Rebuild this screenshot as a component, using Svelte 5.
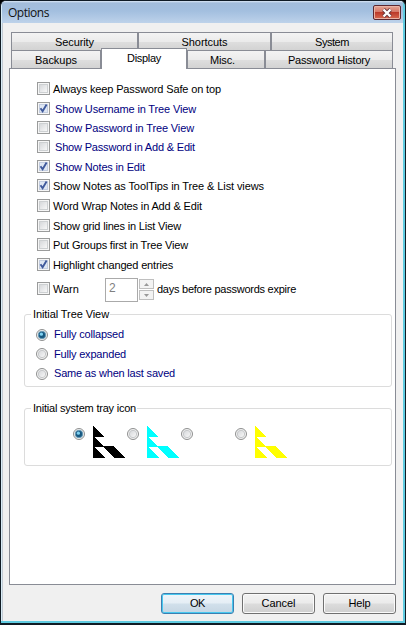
<script>
  const checks = [
    { t: 'Always keep Password Safe on top', w: 168, h: 20 },
    { t: 'Show Username in Tree View', w: 141, h: 19, on: true, blue: true },
    { t: 'Show Password in Tree View', w: 139, h: 19, blue: true },
    { t: 'Show Password in Add & Edit', w: 140, h: 20, blue: true },
    { t: 'Show Notes in Edit', w: 90, h: 19, on: true, blue: true },
    { t: 'Show Notes as ToolTips in Tree & List views', w: 211, h: 20, on: true },
    { t: 'Word Wrap Notes in Add & Edit', w: 149, h: 20 },
    { t: 'Show grid lines in List View', w: 128, h: 19 },
    { t: 'Put Groups first in Tree View', w: 135, h: 20 },
    { t: 'Highlight changed entries', w: 120, h: 24, on: true }
  ];
  const radios = [
    { t: 'Fully collapsed', w: 70, on: true },
    { t: 'Fully expanded', w: 72 },
    { t: 'Same as when last saved', w: 121 }
  ];
  const tray = [{ c: '#000', on: true }, { c: '#0ff' }, { c: null }, { c: '#ff0' }];

  // Spreads the letters so that the label takes the given width.
  function fit(node, width) {
    const natural = node.getBoundingClientRect().width;
    node.style.letterSpacing = (width - natural) / node.textContent.length + 'px';
  }
</script>

{#snippet label(t, w)}<span class="label" use:fit={w}>{t}</span>{/snippet}

{#snippet box(on)}
  <svg class="box" width="13" height="13" viewBox="0 0 13 13">
    <rect x=".5" y=".5" width="12" height="12" fill="#f6f6f6" stroke="#9a9b9b" />
    <rect x="2.5" y="2.5" width="8" height="8" fill={on ? '#dfe7f3' : 'url(#boxfill)'} stroke={on ? '#c3cde0' : '#cdd0d2'} />
    {#if on}<path d="M3.5 6.2 L5.6 9.2 L9.6 2.6" fill="none" stroke="#405a9c" stroke-width="1.9" />{/if}
  </svg>
{/snippet}

{#snippet radio(on)}
  <svg class="radio" width="12" height="12" viewBox="0 0 12 12">
    <circle cx="6" cy="6" r="5.5" fill="#f4f4f4" stroke="#8e8f8f" />
    {#if on}
      <circle cx="6" cy="6" r="3.8" fill="#1d5f8a" stroke="#6f9fb9" stroke-width=".8" />
      <circle cx="6" cy="6" r="2.6" fill="#17587f" />
      <circle cx="5.4" cy="5.2" r="1.6" fill="#7fd2f2" />
    {:else}
      <circle cx="6" cy="6" r="3.7" fill="url(#boxfill)" stroke="#c6c8ca" />
    {/if}
  </svg>
{/snippet}

<div class="window">
  <svg class="defs" width="0" height="0">
    <defs>
      <linearGradient id="boxfill" x1="0" y1="0" x2="1" y2="1">
        <stop offset="0" stop-color="#d4d6d9" /><stop offset="1" stop-color="#fafafa" />
      </linearGradient>
    </defs>
  </svg>
  <header>
    <h1>{@render label('Options', 41)}</h1>
    <button class="close" aria-label="Close">
      <svg width="12" height="10" viewBox="0 0 12 10">
        <path d="M2.5 1.5 L9.5 8.5 M9.5 1.5 L2.5 8.5" stroke="#66343a" stroke-width="4" />
        <path d="M2.5 1.5 L9.5 8.5 M9.5 1.5 L2.5 8.5" stroke="#fff" stroke-width="2.4" />
      </svg>
    </button>
  </header>
  <nav>
    <div class="tabs back">
      <div class="tab">{@render label('Security', 39)}</div>
      <div class="tab">{@render label('Shortcuts', 46)}</div>
      <div class="tab">{@render label('System', 34)}</div>
    </div>
    <div class="tabs front">
      <div class="tab">{@render label('Backups', 42)}</div>
      <div class="tab active">{@render label('Display', 34)}</div>
      <div class="tab misc">{@render label('Misc.', 25)}</div>
      <div class="tab">{@render label('Password History', 82)}</div>
    </div>
  </nav>
  <main>
    <div class="checks">
      {#each checks as c}
        <div class="check" class:blue={c.blue} style:height="{c.h}px">{@render box(c.on)}{@render label(c.t, c.w)}</div>
      {/each}
      <div class="check warn">
        {@render box(false)}{@render label('Warn', 26)}
        <div class="number">2</div>
        <div class="spin">
          <i><svg width="5" height="3"><path d="M0 3 L2.5 0 L5 3Z" fill="#999" /></svg></i>
          <i><svg width="5" height="3"><path d="M0 0 L2.5 3 L5 0Z" fill="#999" /></svg></i>
        </div>
        {@render label('days before passwords expire', 139)}
      </div>
    </div>
    <section class="group tree">
      <h2>{@render label('Initial Tree View', 76)}</h2>
      {#each radios as r}
        <div class="choice">{@render radio(r.on)}{@render label(r.t, r.w)}</div>
      {/each}
    </section>
    <section class="group tray">
      <h2>{@render label('Initial system tray icon', 103)}</h2>
      <div class="icons">
        {#each tray as i}
          <div class="icon">
            {@render radio(i.on)}
            {#if i.c}
              <svg width="32" height="32" viewBox="0 0 32 32" fill={i.c} shape-rendering="crispEdges">
                <path d="M0 0 L10.5 10.5 H0Z M0 10 L10 20 H21 L32 32 H21 L10.5 21 H0Z M0 20 L12 32 H0Z" />
              </svg>
            {/if}
          </div>
        {/each}
      </div>
    </section>
  </main>
  <footer>
    <button class="default">{@render label('OK', 15)}</button>
    <button>{@render label('Cancel', 34)}</button>
    <button>{@render label('Help', 22)}</button>
  </footer>
</div>

<style>
  :global(body) { background: #000; }
  .window {
    box-sizing: border-box;
    width: 406px;
    height: 625px;
    padding: 0 8px;
    position: relative;
    background: #f0f0f0;
    border: solid #101b24;
    border-width: 1px 1px 2px 1px;
    border-radius: 6px 6px 0 0;
    box-shadow: inset -2px -2px 0 #5fcbe0, inset 1px 0 0 #d9edf7, inset 2px 0 0 #c2cad3;
    font: 11px/13px "Liberation Sans", Arial, sans-serif;
    color: #000;
    overflow: hidden;
  }
  .defs { position: absolute; }
  .label { white-space: nowrap; }
  header {
    height: 22px;
    margin: 0 -6px 0 -7px;
    padding: 0 1px 0 6px;
    background: linear-gradient(#dbe8f5 0, #a3bddb 2px, #a3bfdf 10px, #bdd2ea);
    display: flex;
    justify-content: space-between;
  }
  h1 { margin: 4px 0 0; font: 12px/16px "Open Sans", "Noto Sans", sans-serif; color: #111; }
  button { box-sizing: border-box; padding: 0; font: inherit; color: #000; }
  .close {
    width: 28px;
    height: 15px;
    margin: 4px 1px 0 0;
    border: 1px solid #5c2830;
    border-radius: 2px;
    background: linear-gradient(#e6a695, #d57767 45%, #bc3a2a 50%, #d86a51);
    box-shadow: inset 0 0 0 1px #e9b3a5;
    display: flex;
    align-items: center;
    justify-content: center;
  }
  nav { width: 382px; margin: 9px 0 0 2px; }
  .tabs { display: grid; }
  .back { grid-template-columns: 127px 133px 122px; height: 18px; }
  .front { grid-template-columns: 90px 86px 78px 128px; height: 18px; }
  .tab {
    box-sizing: border-box;
    border: solid #898c95;
    border-width: 1px 1px 0 1px;
    background: linear-gradient(#f3f3f3, #ebebeb 50%, #dedede 52%, #d3d3d3);
    text-align: center;
    padding-top: 3px;
    height: 18px;
  }
  .misc { padding-right: 7px; }
  .active { background: #fff; height: 21px; margin-top: -2px; position: relative; }
  main {
    box-sizing: border-box;
    width: 387px;
    height: 517px;
    border: 1px solid #898c95;
    background: #fff;
    padding: 13px 3px 0 14px;
  }
  .checks { padding-left: 13px; height: 232px; }
  .check { display: flex; align-items: flex-start; gap: 3px; }
  .check .label { padding-top: 1px; }
  .box, .radio { display: block; flex: none; }
  .blue { color: #000080; gap: 5px; }
  .warn .box + .label { width: 26px; }
  .warn .label { padding-top: 1px; }
  .number {
    box-sizing: border-box;
    width: 33px;
    height: 24px;
    margin: -4px 0 0 23px;
    border: 1px solid #aaa;
    padding: 3px;
    color: #808080;
    font-size: 12px;
  }
  .spin { width: 15px; margin: -3px 0 0 -2px; display: grid; gap: 1px; }
  .spin i {
    box-sizing: border-box;
    height: 10px;
    border: 1px solid #bfbfbf;
    background: #f3f3f3;
    display: grid;
    place-items: center;
  }
  .group {
    box-sizing: border-box;
    width: 368px;
    border: 1px solid #dcdcdc;
    border-radius: 3px;
  }
  h2 { width: fit-content; margin: -7px 0 0 6px; padding: 0 1px 0 2px; background: #fff; font: inherit; }
  .tree { height: 73px; color: #000080; }
  .tree h2 { color: #000; }
  .choice { display: flex; align-items: center; gap: 6px; margin-left: 11px; height: 19.5px; }
  .tree h2 + .choice { margin-top: 4px; }
  .tray { height: 58px; margin-top: 21px; }
  .icons { display: flex; margin: 11px 0 0 48px; }
  .icon { width: 54px; display: flex; align-items: flex-start; gap: 8px; }
  .icon .radio { margin-top: 2px; }
  footer { display: flex; justify-content: flex-end; gap: 8px; margin: 8px 0 0; padding-right: 1px; }
  footer button {
    width: 73px;
    height: 21px;
    border: 1px solid #707070;
    border-radius: 3px;
    background: linear-gradient(#f2f2f2, #ebebeb 48%, #dcdcdc 52%, #cfcfcf);
    box-shadow: inset 0 0 0 1px #fafafa;
  }
  footer .default {
    border-color: #3c7fb1;
    background: linear-gradient(#eff5fa, #e5eef5 48%, #d1e0eb 52%, #c6d6e3);
    box-shadow: inset 0 0 0 1px #48c8ef;
  }
</style>
